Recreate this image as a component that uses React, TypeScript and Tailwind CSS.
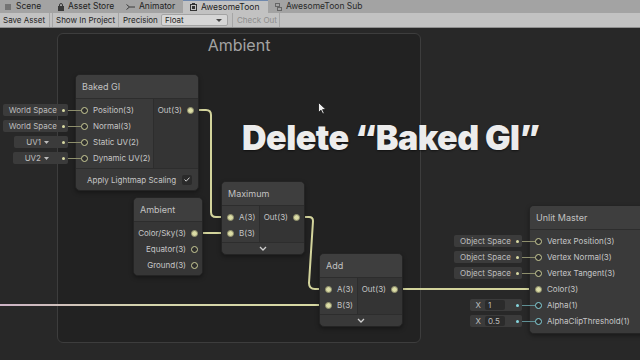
import React from 'react';

type PortProps = { filled?: boolean; teal?: boolean };

function Port({ filled, teal }: PortProps) {
  if (filled) {
    return (
      <span className={`w-[7px] h-[7px] shrink-0 rounded-full border flex items-center justify-center ${teal ? 'border-[#6fb8bf] bg-[#2c2c2c]' : 'border-[#a9aa7e] bg-[#2c2c2c]'}`}>
        <span className={`w-[5px] h-[5px] rounded-full ${teal ? 'bg-[#8ddde5]' : 'bg-[#dcdda6]'}`} />
      </span>
    );
  }
  return <span className={`w-[7px] h-[7px] shrink-0 rounded-full border ${teal ? 'border-[#86d3db]' : 'border-[#cbcd98]'} bg-[#2e2e2e]`} />;
}

function Ext({ children, teal }: { children: React.ReactNode; teal?: boolean }) {
  return (
    <div className="absolute right-[calc(100%-5px)] top-1/2 -translate-y-1/2 flex items-center">
      <div className="h-[12px] flex items-center gap-[5px] bg-[#3b3b3b] rounded-[2px] pl-[6px] pr-[3px] text-[#bdbdbd] whitespace-nowrap">
        {children}
        <span className={`w-[3px] h-[3px] rounded-full ${teal ? 'bg-[#86d6de]' : 'bg-[#d8d9a2]'}`} />
      </div>
      <div className={`w-[13px] h-px ${teal ? 'bg-[#5f8f94]' : 'bg-[#8d8e6c]'}`} />
    </div>
  );
}

function InRow({ label, filled, teal, ext }: { label: string; filled?: boolean; teal?: boolean; ext?: React.ReactNode }) {
  return (
    <div className="relative h-4 flex items-center pl-[5px] gap-[5px] whitespace-nowrap">
      {ext}
      <Port filled={filled} teal={teal} />
      <span>{label}</span>
    </div>
  );
}

function OutRow({ label, filled }: { label: string; filled?: boolean }) {
  return (
    <div className="h-4 flex items-center justify-end pr-[4px] gap-[5px] whitespace-nowrap">
      <span>{label}</span>
      <Port filled={filled} />
    </div>
  );
}

function Node({ className, title, children }: { className: string; title: string; children: React.ReactNode }) {
  return (
    <div className={`absolute rounded-[5px] border border-[#242424] bg-[#393939] text-[8px] text-[#c6c6c6] shadow-[0_2px_4px_rgba(0,0,0,0.35)] ${className}`}>
      <div className="h-[24px] flex items-center pl-[6px] text-[9px] text-[#c2c2c2] bg-[#3e3e3e] rounded-t-[4px] border-b border-[#2d2d2d]">{title}</div>
      {children}
    </div>
  );
}

function Chevron() {
  return (
    <div className="h-[12px] flex items-center justify-center border-t border-[#2d2d2d] rounded-b-[4px]">
      <svg width="8" height="5" viewBox="0 0 8 5">
        <path d="M1 1 L4 4 L7 1" fill="none" stroke="#cfcfcf" strokeWidth="1.3" />
      </svg>
    </div>
  );
}

function UvDrop({ label }: { label: string }) {
  return (
    <span className="flex items-center gap-[3px] pl-[6px] pr-[8px]">
      {label}
      <svg width="5" height="3" viewBox="0 0 5 3"><path d="M0 0 H5 L2.5 3 Z" fill="#bdbdbd" /></svg>
    </span>
  );
}

function XField({ value }: { value: string }) {
  return (
    <span className="flex items-center gap-[4px]">
      <span>X</span>
      <span className="w-[20px] h-[10px] bg-[#2b2b2b] rounded-[2px] pl-[3px] flex items-center">{value}</span>
      <span className="w-[2px]" />
    </span>
  );
}

export default function App() {
  return (
    <div className="w-[640px] h-[360px] overflow-hidden flex flex-col font-['Inter',sans-serif] bg-[#282828]">
      {/* tab strip */}
      <div className="h-[13px] shrink-0 bg-[#a3a3a3] flex text-[8.5px] text-[#1e1e1e] leading-none whitespace-nowrap">
        <div className="w-[52px] flex items-center gap-[5px] pl-[5px]">
          <svg width="6" height="6" viewBox="0 0 6 6"><path d="M0 1 H6 M0 3 H6 M0 5 H6" stroke="#444" strokeWidth="1" /></svg>
          <span>Scene</span>
        </div>
        <div className="w-[68px] flex items-center gap-[4px] pl-[6px]">
          <svg width="6" height="8" viewBox="0 0 6 8"><path d="M1.5 3 V2 A1.5 1.5 0 0 1 4.5 2 V3" fill="none" stroke="#3a3a3a" /><rect x="0" y="3" width="6" height="5" fill="#3a3a3a" /></svg>
          <span>Asset Store</span>
        </div>
        <div className="w-[63px] flex items-center gap-[4px] pl-[6px]">
          <svg width="9" height="6" viewBox="0 0 9 6"><path d="M0.5 0.5 L3.5 3 L0.5 5.5 M3.5 3 H9" fill="none" stroke="#3a3a3a" /></svg>
          <span>Animator</span>
        </div>
        <div className="w-[85px] flex items-center gap-[4px] pl-[7px] bg-[#c2c2c2] border-t border-[#6f88ad]">
          <svg width="7" height="8" viewBox="0 0 7 8"><path d="M2 0.5 H5" stroke="#333" /><rect x="0.5" y="1.5" width="6" height="6" fill="none" stroke="#333" /><rect x="2" y="3" width="3" height="3" fill="#333" /></svg>
          <span>AwesomeToon</span>
        </div>
        <div className="w-[100px] flex items-center gap-[4px] pl-[7px] text-[#2a2a2a]">
          <svg width="7" height="8" viewBox="0 0 7 8"><rect x="0.5" y="0.5" width="4" height="3" fill="none" stroke="#666" /><rect x="2.5" y="4.5" width="4" height="3" fill="none" stroke="#666" /></svg>
          <span>AwesomeToon Sub</span>
        </div>
      </div>

      {/* toolbar */}
      <div className="h-[15px] shrink-0 bg-[#c2c2c2] border-b border-[#8e8e8e] flex items-stretch text-[8px] text-[#1e1e1e] leading-none whitespace-nowrap">
        <div className="w-[50px] flex items-center pl-[3px] border-r border-[#a6a6a6]">Save Asset</div>
        <div className="w-[3px] border-r border-[#a6a6a6]" />
        <div className="w-[66px] flex items-center pl-[3px] border-r border-[#a6a6a6]">Show In Project</div>
        <div className="flex items-center pl-[4px] w-[42px]">Precision</div>
        <div className="my-[1px] w-[67px] flex items-center justify-between pl-[3px] pr-[5px] bg-[#d6d6d6] border border-[#a3a3a3] rounded-[2px]">
          <span>Float</span>
          <svg width="6" height="3" viewBox="0 0 6 3"><path d="M0 0 H6 L3 3 Z" fill="#444" /></svg>
        </div>
        <div className="ml-[4px] w-[48px] flex items-center pl-[4px] text-[#8d8d8d] border-l border-r border-[#a6a6a6]">Check Out</div>
      </div>

      {/* graph canvas */}
      <div className="relative flex-1 bg-[#282828] overflow-hidden">
        {/* group */}
        <div className="absolute left-[57px] top-[5px] w-[364px] h-[310px] rounded-[6px] border border-[#3d3d3d] bg-[#222222]">
          <div className="pt-[3px] text-center text-[16px] leading-none text-[#a3a3a3]">Ambient</div>
        </div>

        {/* wires */}
        <svg className="absolute left-0 top-0" width="640" height="332" viewBox="0 0 640 332">
          <defs>
            <linearGradient id="lw" x1="0" y1="0" x2="328" y2="0" gradientUnits="userSpaceOnUse">
              <stop offset="0" stopColor="#cdb3c6" />
              <stop offset="0.45" stopColor="#d4d4ac" />
              <stop offset="1" stopColor="#d8d9a2" />
            </linearGradient>
          </defs>
          <g fill="none" strokeWidth="2" stroke="#d3d49c">
            <path d="M190 82 H206 Q211 82 211 87 V184 Q211 189 216 189 H230" />
            <path d="M194 205 H230" />
            <path d="M296 189 H309 Q313 189 313 193 L309 255 Q309 261 315 261 H328" />
            <path d="M393 261 H538" />
            <path d="M0 277 H328" stroke="url(#lw)" />
          </g>
        </svg>

        {/* Baked GI */}
        <Node className="left-[75px] top-[46px] w-[124px]" title="Baked GI">
          <div className="flex">
            <div className="w-[77px] pt-[3px] pb-[2px] bg-[#3a3a3a]">
              <InRow label="Position(3)" ext={<Ext>World Space</Ext>} />
              <InRow label="Normal(3)" ext={<Ext>World Space</Ext>} />
              <InRow label="Static UV(2)" ext={<Ext><UvDrop label="UV1" /></Ext>} />
              <InRow label="Dynamic UV(2)" ext={<Ext><UvDrop label="UV2" /></Ext>} />
            </div>
            <div className="flex-1 pt-[3px] bg-[#343434] border-l border-[#2d2d2d]">
              <OutRow label="Out(3)" filled />
            </div>
          </div>
          <div className="h-[22px] flex items-center justify-between pl-[11px] pr-[6px] border-t border-[#2d2d2d] rounded-b-[4px]">
            <span>Apply Lightmap Scaling</span>
            <span className="w-[10px] h-[10px] rounded-[2px] bg-[#2a2a2a] flex items-center justify-center">
              <svg width="6" height="5" viewBox="0 0 6 5"><path d="M0.5 2.5 L2.2 4.2 L5.5 0.6" fill="none" stroke="#d0d0d0" strokeWidth="1" /></svg>
            </span>
          </div>
        </Node>

        {/* Ambient node */}
        <Node className="left-[133px] top-[169px] w-[70px]" title="Ambient">
          <div className="pt-[3px] pb-[2px] bg-[#363636] rounded-b-[4px]">
            <OutRow label="Color/Sky(3)" filled />
            <OutRow label="Equator(3)" />
            <OutRow label="Ground(3)" />
          </div>
        </Node>

        {/* Maximum */}
        <Node className="left-[221px] top-[153px] w-[84px]" title="Maximum">
          <div className="flex">
            <div className="w-[37px] pt-[3px] pb-[1px] bg-[#3a3a3a]">
              <InRow label="A(3)" filled />
              <InRow label="B(3)" filled />
            </div>
            <div className="flex-1 pt-[3px] bg-[#343434] border-l border-[#2d2d2d]">
              <OutRow label="Out(3)" filled />
            </div>
          </div>
          <Chevron />
        </Node>

        {/* Add */}
        <Node className="left-[319px] top-[225px] w-[84px]" title="Add">
          <div className="flex">
            <div className="w-[37px] pt-[3px] pb-[1px] bg-[#3a3a3a]">
              <InRow label="A(3)" filled />
              <InRow label="B(3)" filled />
            </div>
            <div className="flex-1 pt-[3px] bg-[#343434] border-l border-[#2d2d2d]">
              <OutRow label="Out(3)" filled />
            </div>
          </div>
          <Chevron />
        </Node>

        {/* Unlit Master */}
        <Node className="left-[529px] top-[177px] w-[130px]" title="Unlit Master">
          <div className="pt-[3px] pb-[4px] bg-[#3a3a3a] rounded-b-[4px]">
            <InRow label="Vertex Position(3)" ext={<Ext>Object Space</Ext>} />
            <InRow label="Vertex Normal(3)" ext={<Ext>Object Space</Ext>} />
            <InRow label="Vertex Tangent(3)" ext={<Ext>Object Space</Ext>} />
            <InRow label="Color(3)" filled />
            <InRow label="Alpha(1)" teal ext={<Ext teal><XField value="1" /></Ext>} />
            <InRow label="AlphaClipThreshold(1)" teal ext={<Ext teal><XField value="0.5" /></Ext>} />
          </div>
        </Node>

        {/* caption */}
        <div className="absolute left-[242px] top-[93px] text-[34px] leading-none font-black tracking-[-0.5px] text-[#ececec] whitespace-nowrap [text-shadow:0_1px_2px_rgba(0,0,0,0.5)]">
          Delete “Baked GI”
        </div>

        {/* cursor */}
        <svg className="absolute left-[318px] top-[74px]" width="9" height="13" viewBox="0 0 9 13">
          <path d="M0.5 0.5 V10.5 L3 8.2 L4.8 12 L6.3 11.3 L4.6 7.6 H8 Z" fill="#eeeeee" stroke="#111" strokeWidth="0.8" />
        </svg>
      </div>
    </div>
  );
}
